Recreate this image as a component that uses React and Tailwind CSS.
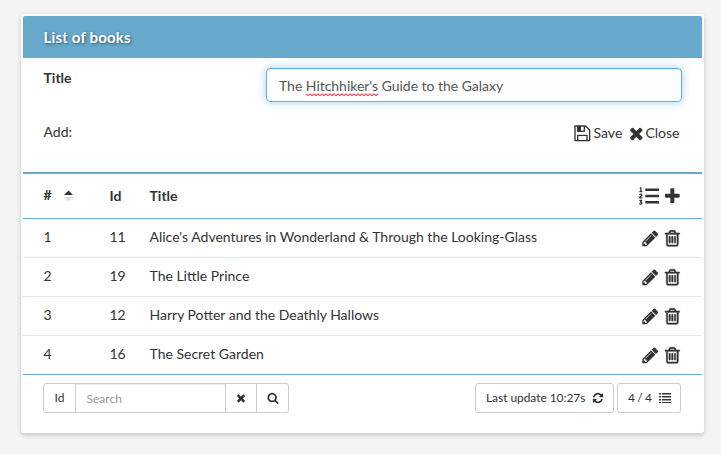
import React from "react";
import { FaListOl } from "react-icons/fa";

const PATHS = {
  save: "M512 1536h768v-384h-768v384zm896 0h128v-896q0-14-10-38.5t-20-34.5l-281-281q-10-10-34-20t-39-10v416q0 40-28 68t-68 28h-576q-40 0-68-28t-28-68v-416h-128v1280h128v-416q0-40 28-68t68-28h832q40 0 68 28t28 68v416zm-384-928v-320q0-13-9.5-22.5t-22.5-9.5h-192q-13 0-22.5 9.5t-9.5 22.5v320q0 13 9.5 22.5t22.5 9.5h192q13 0 22.5-9.5t9.5-22.5zm640 32v928q0 40-28 68t-68 28h-1344q-40 0-68-28t-28-68v-1344q0-40 28-68t68-28h928q40 0 88 20t76 48l280 280q28 28 48 76t20 88z",
  times: "M1490 1322q0 40-28 68l-136 136q-28 28-68 28t-68-28l-294-294-294 294q-28 28-68 28t-68-28l-136-136q-28-28-28-68t28-68l294-294-294-294q-28-28-28-68t28-68l136-136q28-28 68-28t68 28l294 294 294-294q28-28 68-28t68 28l136 136q28 28 28 68t-28 68l-294 294 294 294q28 28 28 68z",
  plus: "M1600 736v192q0 40-28 68t-68 28h-416v416q0 40-28 68t-68 28h-192q-40 0-68-28t-28-68v-416h-416q-40 0-68-28t-28-68v-192q0-40 28-68t68-28h416v-416q0-40 28-68t68-28h192q40 0 68 28t28 68v416h416q40 0 68 28t28 68z",
  search: "M1216 832q0-185-131.5-316.5t-316.5-131.5-316.5 131.5-131.5 316.5 131.5 316.5 316.5 131.5 316.5-131.5 131.5-316.5zm512 832q0 52-38 90t-90 38q-54 0-90-38l-343-342q-179 124-399 124-143 0-273.5-55.5t-225-150-150-225-55.5-273.5 55.5-273.5 150-225 225-150 273.5-55.5 273.5 55.5 225 150 150 225 55.5 273.5q0 220-124 399l343 343q37 37 37 90z",
  refresh: "M1639 1056q0 5-1 7-64 268-268 434.5t-478 166.5q-146 0-282.5-55t-243.5-157l-129 129q-19 19-45 19t-45-19-19-45v-448q0-26 19-45t45-19h448q26 0 45 19t19 45-19 45l-137 137q71 66 161 102t187 36q134 0 250-65t186-179q11-17 53-117 8-23 30-23h192q13 0 22.5 9.5t9.5 22.5zm25-800v448q0 26-19 45t-45 19h-448q-26 0-45-19t-19-45 19-45l138-138q-148-137-349-137-134 0-250 65t-186 179q-11 17-53 117-8 23-30 23h-199q-13 0-22.5-9.5t-9.5-22.5v-7q65-268 270-434.5t480-166.5q146 0 284 55.5t245 156.5l130-129q19-19 45-19t45 19 19 45z",
  pencil: "M491 1536l91-91-235-235-91 91v107h128v128h107zm523-928q0-22-22-22-10 0-17 7l-542 542q-7 7-7 17 0 22 22 22 10 0 17-7l542-542q7-7 7-17zm-54-192l416 416-832 832h-416v-416zm683 96q0 53-37 90l-166 166-416-416 166-165q36-38 90-38 53 0 91 38l235 234q37 39 37 91z",
  trash: "M704 736v576q0 14-9 23t-23 9h-64q-14 0-23-9t-9-23v-576q0-14 9-23t23-9h64q14 0 23 9t9 23zm256 0v576q0 14-9 23t-23 9h-64q-14 0-23-9t-9-23v-576q0-14 9-23t23-9h64q14 0 23 9t9 23zm256 0v576q0 14-9 23t-23 9h-64q-14 0-23-9t-9-23v-576q0-14 9-23t23-9h64q14 0 23 9t9 23zm128 724v-948h-896v948q0 22 7 40.5t14.5 27 10.5 8.5h832q3 0 10.5-8.5t14.5-27 7-40.5zm-672-1076h448l-48-117q-7-9-17-11h-317q-10 2-17 11zm928 32v64q0 14-9 23t-23 9h-96v948q0 83-47 143.5t-113 60.5h-832q-66 0-113-58.5t-47-141.5v-952h-96q-14 0-23-9t-9-23v-64q0-14 9-23t23-9h309l70-167q15-37 54-63t79-26h320q40 0 79 26t54 63l70 167h309q14 0 23 9t9 23z",
};

function Icon({ name, className }) {
  return (
    <svg viewBox="0 0 1792 1792" fill="currentColor" className={"shrink-0 overflow-visible " + className}>
      <path d={PATHS[name]} />
    </svg>
  );
}

function ListIcon() {
  return (
    <svg viewBox="0 0 12 10" className="h-[10px] w-[12px] shrink-0" fill="currentColor" shapeRendering="crispEdges">
      {[0, 3, 6, 9].map((y) => (
        <g key={y}>
          <rect x="0" y={y} width="2" height="1" />
          <rect x="3" y={y} width="9" height="1" />
          <rect x="0" y={y + 1} width="2" height="1" opacity="0.5" />
          <rect x="3" y={y + 1} width="9" height="1" opacity="0.5" />
        </g>
      ))}
    </svg>
  );
}

function Squiggle() {
  return (
    <svg className="absolute bottom-0 left-0 h-[3px] w-full" aria-hidden="true">
      <defs>
        <pattern id="squiggle" width="4" height="3" patternUnits="userSpaceOnUse">
          <path d="M-1 -0.5 L2 2.5 L5 -0.5" transform="translate(0 0.2)" fill="none" stroke="#f00" strokeWidth="1" />
        </pattern>
      </defs>
      <rect width="100%" height="3" fill="url(#squiggle)" />
    </svg>
  );
}

const BOOKS = [
  [1, 11, "Alice's Adventures in Wonderland & Through the Looking-Glass"],
  [2, 19, "The Little Prince"],
  [3, 12, "Harry Potter and the Deathly Hallows"],
  [4, 16, "The Secret Garden"],
];

export default function App() {
  return (
    <div className="h-[454px] w-[721px] bg-[#f4f4f4] pl-[21px] pt-[14px] font-['Lato',sans-serif] text-[14px] leading-5 text-[#333]">
      <div className="h-[419px] w-[683px] rounded-[3px] bg-white p-[2px] shadow-[0_2px_5px_rgba(0,0,0,0.2)]">
        <header className="flex h-[42px] items-center rounded-t-[2px] bg-[#67aacc] pl-[20.5px] text-[15px] font-bold tracking-[0.18px] text-white [text-shadow:1px_1px_3px_rgba(0,0,0,0.5)]">
          List of books
        </header>

        <div className="flex h-[54px] justify-between pl-[20.5px] pr-5 pt-[10px]">
          <label className="font-bold">Title</label>
          <div className="flex h-[34px] w-[416px] items-center rounded-[4px] border border-[#66afe9] pl-3 pt-[2px] text-[#555] shadow-[inset_0_1px_1px_rgba(0,0,0,0.075),0_0_8px_rgba(102,175,233,0.6)]">
            <span className="whitespace-pre tracking-[-0.03px]">
              The{" "}
              <span className="relative inline-block">
                Hitchhiker's
                <Squiggle />
              </span>
              {" "}Guide to the Galaxy
            </span>
          </div>
        </div>

        <div className="flex h-[60px] justify-between pl-[20.5px] pr-[22.5px] pt-[10px]">
          <span>Add:</span>
          <div className="flex h-5 items-center">
            <Icon name="save" className="mt-[2px] h-[18.67px] w-[18.67px]" />
            <span className="ml-[2px] mt-[2px]">Save</span>
            <Icon name="times" className="ml-[4.5px] mt-[2px] h-[18.67px] w-[18.67px]" />
            <span className="mt-[2px]">Close</span>
          </div>
        </div>

        <div className="flex h-[47px] items-center border-b border-t-2 border-[#67aacc] pl-[20.5px] pr-[20px] font-bold">
          <div className="flex w-[66px] items-center">
            <span className="-mt-[2px]">#</span>
            <svg viewBox="0 0 9 12" className="ml-3 h-3 w-[9px]">
              <path d="M0 5 4.5 0.5 9 5z" fill="#333" />
              <path d="M0 7h9L4.5 11.5z" fill="#ddd" />
            </svg>
          </div>
          <span className="w-10">Id</span>
          <span className="flex-1">Title</span>
          <FaListOl className="h-5 w-5 shrink-0" />
          <Icon name="plus" className="ml-[4px] h-[18.67px] w-[18.67px]" />
        </div>

        {BOOKS.map(([n, id, title], i) => (
          <div
            key={n}
            className={
              "flex h-[39px] items-center border-b pb-[2px] pl-[20.5px] pr-[20px] " +
              (i === 3 ? "border-[#67aacc]" : "border-[#d9e8f1]")
            }
          >
            <span className="w-[66px]">{n}</span>
            <span className="w-10">{id}</span>
            <span className="flex-1">{title}</span>
            <Icon name="pencil" className="mt-[2px] h-[18.67px] w-[18.67px]" />
            <Icon name="trash" className="ml-[4px] mt-[2px] h-[18.67px] w-[18.67px] stroke-current stroke-[50]" />
          </div>
        ))}

        <footer className="flex justify-between pl-5 pr-[21px] pt-2 text-[12px]">
          <div className="flex h-[30px] w-[246px] rounded-[3px] border border-[#ccc]">
            <span className="flex w-8 items-center justify-center border-r border-[#ccc]">Id</span>
            <span className="flex flex-1 items-center pl-[10.5px] pt-[2px] text-[#999] shadow-[inset_0_1px_1px_rgba(0,0,0,0.075)]">Search</span>
            <span className="flex w-[31px] items-center justify-center border-l border-[#ccc]">
              <Icon name="times" className="h-3 w-3" />
            </span>
            <span className="flex w-8 items-center justify-center border-l border-[#ccc]">
              <Icon name="search" className="h-3 w-3" />
            </span>
          </div>
          <div className="flex gap-[3px]">
            <div className="flex h-[30px] w-[139px] items-center rounded-[3px] border border-[#ccc] pl-[10px]">
              <span className="tracking-[-0.06px]">Last update 10:27s</span>
              <Icon name="refresh" className="ml-[7px] h-3 w-3" />
            </div>
            <div className="flex h-[30px] w-16 items-center justify-between rounded-[3px] border border-[#ccc] pl-[10px] pr-[9px]">
              <span className="tracking-[-0.4px]">4 / 4</span>
              <ListIcon />
            </div>
          </div>
        </footer>
      </div>
    </div>
  );
}
